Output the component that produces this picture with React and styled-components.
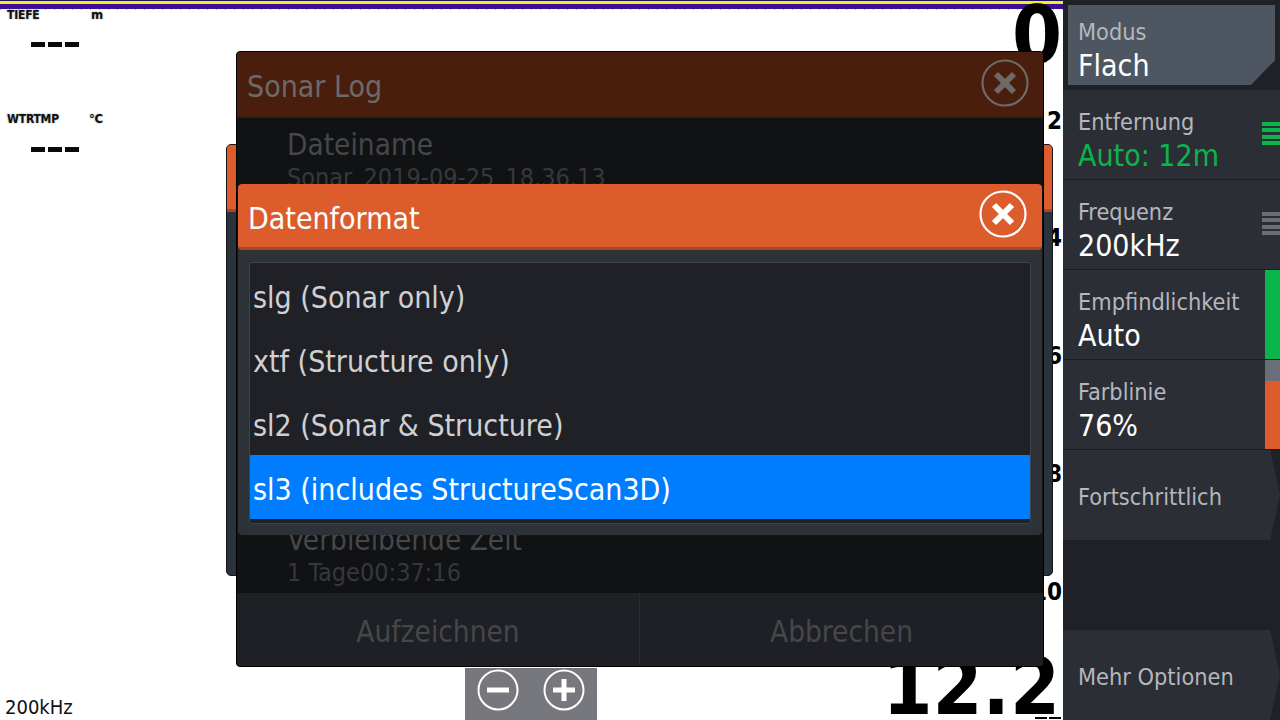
import React from 'react';
import styled, { createGlobalStyle } from 'styled-components';

const UI = '"DejaVu Sans Condensed", "DejaVu Sans", sans-serif';

const Global = createGlobalStyle`
  html, body { margin: 0; padding: 0; background: #fff; }
  body { font-family: ${UI}; overflow: hidden; }
  #root { width: 1280px; height: 720px; }
`;

const Screen = styled.div`
  position: relative;
  width: 1280px;
  height: 720px;
  display: flex;
  overflow: hidden;
  background: #fff;
`;

/* sonar canvas */
const Canvas = styled.div`
  position: relative;
  width: 1063px;
  height: 720px;
  flex: none;
  overflow: hidden;
  background: #fff;
`;
const Surface = styled.div`
  height: 9px;
  background: linear-gradient(#1c1466 0 1px, #f7ee17 1px 4px, #3c0d9c 4px 9px);
`;
const SurfaceSpeckle = styled.div`
  height: 1px;
  background: repeating-linear-gradient(90deg, #777 0 1px, transparent 1px 9px);
  opacity: 0.55;
`;
const Readout = styled.div`
  position: absolute;
  left: 7px;
  top: ${p => p.$top}px;
  width: 96px;
  display: grid;
  grid-template-columns: 1fr auto;
  align-items: center;
  color: #111;
  font: bold 12px/14px ${UI};
  letter-spacing: -0.2px;
  text-shadow: 0 0 2px #999;
`;
const Unit = styled.span`
  font-size: 13px;
`;
const Dashes = styled.div`
  grid-column: 1 / 3;
  display: flex;
  gap: 3px;
  margin: ${p => p.$gap}px 0 0 24px;
  i { width: 14px; height: 5px; background: #0a0a0a; display: block; }
`;
const ScaleNum = styled.div`
  position: absolute;
  right: 1px;
  top: ${p => p.$top}px;
  color: #000;
  font: bold 24px/28px ${UI};
`;
const BigNum = styled.div`
  position: absolute;
  right: ${p => p.$right}px;
  top: ${p => p.$top}px;
  color: #000;
  font: bold 80px/80px ${UI};
`;
const TinyDash = styled.div`
  position: absolute;
  right: 2px;
  top: 717px;
  display: flex;
  gap: 2px;
  i { display: block; width: 12px; height: 2px; background: #000; }
`;
const Freq = styled.div`
  position: absolute;
  left: 5px;
  top: 696px;
  color: #111;
  font: 20px/22px ${UI};
`;
const ZoomBar = styled.div`
  position: absolute;
  left: 465px;
  top: 668px;
  width: 132px;
  height: 52px;
  background: #77787d;
  display: flex;
  align-items: flex-start;
  justify-content: center;
  gap: 24px;
  padding-top: 1px;
  box-sizing: border-box;
`;

/* dialogs */
const BackDialog = styled.div`
  position: absolute;
  left: 236px;
  top: 51px;
  width: 808px;
  height: 616px;
  box-sizing: border-box;
  border: 1px solid #000;
  border-radius: 4px;
  background: #111214;
  display: flex;
  flex-direction: column;
  overflow: hidden;
`;
const BackHeader = styled.div`
  height: 66px;
  flex: none;
  box-sizing: border-box;
  background: #4a1e0c;
  border-bottom: 2px solid #3e1a0c;
  display: flex;
  align-items: center;
  justify-content: space-between;
  padding: 5px 14px 0 10px;
  color: #6c6a68;
  font-size: 30px;
`;
const CloseSlot = styled.div`
  display: flex;
  margin-top: ${p => p.$lift}px;
`;
const BackBody = styled.div`
  flex: 1;
  position: relative;
  padding: 10px 0 0 50px;
  color: #45474a;
`;
const FieldName = styled.div`
  font-size: 29.5px;
  line-height: 35px;
`;
const FieldValue = styled.div`
  font-size: 25px;
  line-height: 30px;
  color: #36383b;
`;
const LowerField = styled.div`
  position: absolute;
  left: 50px;
  top: 405px;
`;
const BackFooter = styled.div`
  height: 73px;
  flex: none;
  background: #1e2025;
  display: grid;
  grid-template-columns: 402px 1fr;
`;
const FooterBtn = styled.div`
  display: flex;
  align-items: center;
  justify-content: center;
  color: #45474a;
  font-size: 29.5px;
  padding-top: 4px;
  box-sizing: border-box;
  & + & { border-left: 1px solid #292b30; }
`;
const MiddleDialog = styled.div`
  position: absolute;
  left: 226px;
  top: 144px;
  width: 827px;
  height: 432px;
  box-sizing: border-box;
  border: 1px solid #14171a;
  border-radius: 5px;
  background: #2a323b;
  overflow: hidden;
`;
const MiddleHeader = styled.div`
  height: 64px;
  background: #dc5c2c;
  border-bottom: 3px solid #a8482a;
`;
const FrontDialog = styled.div`
  position: absolute;
  left: 238px;
  top: 184px;
  width: 804px;
  height: 351px;
  background: #2d3138;
  border-radius: 4px;
  display: flex;
  flex-direction: column;
  overflow: hidden;
`;
const FrontHeader = styled.div`
  height: 66px;
  flex: none;
  box-sizing: border-box;
  background: #dc5c2c;
  border-bottom: 3px solid #a8482a;
  border-radius: 4px;
  display: flex;
  align-items: center;
  justify-content: space-between;
  padding: 6px 15px 0 10px;
  color: #fff;
  font-size: 30px;
`;
const OptionList = styled.div`
  margin: 12px 11px 0;
  width: 782px;
  height: 262px;
  box-sizing: border-box;
  border: 1px solid #3d434a;
  border-radius: 2px;
  background: #1f2126;
`;
const Option = styled.div`
  height: 64px;
  box-sizing: border-box;
  display: flex;
  align-items: center;
  padding: 4px 0 0 3px;
  font-size: 30px;
  color: ${p => (p.$selected ? '#fff' : '#d0d0d2')};
  background: ${p => (p.$selected ? '#007dff' : 'transparent')};
`;

/* sidebar */
const Sidebar = styled.div`
  width: 217px;
  height: 720px;
  flex: none;
  background: #1f2126;
  display: flex;
  flex-direction: column;
`;
const ActiveSlot = styled.div`
  height: 90px;
  flex: none;
  box-sizing: border-box;
  padding: 5px;
`;
const ActiveItem = styled.div`
  height: 80px;
  box-sizing: border-box;
  background: #4e5761;
  padding: 11px 10px 0;
  clip-path: polygon(0 0, 100% 0, 100% 69%, 88.4% 100%, 0 100%);
`;
const Item = styled.div`
  position: relative;
  height: 90px;
  flex: none;
  box-sizing: border-box;
  background: #2c2e36;
  border-bottom: 1px solid #1c1e22;
  padding: 16px 15px 0;
`;
const ArrowItem = styled.div`
  height: 90px;
  flex: none;
  box-sizing: border-box;
  background: #2c2e36;
  display: flex;
  align-items: center;
  padding: 3px 15px 0;
  clip-path: polygon(0 0, 95.5% 0, 100% 50%, 95.5% 100%, 0 100%);
`;
const Spacer = styled.div`
  flex: 1;
`;
const Label = styled.div`
  color: #b4b7bd;
  font-size: 23.3px;
  line-height: 32px;
  white-space: nowrap;
`;
const Value = styled.div`
  color: ${p => p.$color || '#fff'};
  font-size: 30px;
  line-height: 36px;
  white-space: nowrap;
`;
const BarGroup = styled.div`
  position: absolute;
  right: 0;
  top: 32px;
  width: 18px;
  height: 23px;
  display: flex;
  flex-direction: column;
  justify-content: space-between;
  i { display: block; height: 4px; background: ${p => p.$color}; }
`;
const Level = styled.div`
  position: absolute;
  right: 0;
  top: 0;
  bottom: 0;
  width: 15px;
  display: flex;
  flex-direction: column;
  background: ${p => p.$track};
`;
const LevelFill = styled.div`
  margin-top: auto;
  background: ${p => p.$color};
`;

const CloseIcon = ({ color }) => (
  <svg width="48" height="48" viewBox="0 0 48 48" fill="none" stroke={color}>
    <circle cx="24" cy="24" r="22.5" strokeWidth="2.2" />
    <path d="M15 15 33 33M33 15 15 33" strokeWidth="6" />
  </svg>
);
const RoundIcon = ({ plus }) => (
  <svg width="42" height="42" viewBox="0 0 42 42" fill="none" stroke="#fff">
    <circle cx="21" cy="21" r="19.5" strokeWidth="2" />
    <path d={plus ? 'M10 21H32M21 10V32' : 'M10 21H32'} strokeWidth="5" />
  </svg>
);

export default function App() {
  return (
    <Screen>
      <Global />
      <Canvas>
        <Surface />
        <SurfaceSpeckle />
        <Readout $top={8}>
          <span>TIEFE</span><Unit>m</Unit>
          <Dashes $gap={20}><i /><i /><i /></Dashes>
        </Readout>
        <Readout $top={112}>
          <span>WTRTMP</span><Unit>°C</Unit>
          <Dashes $gap={21}><i /><i /><i /></Dashes>
        </Readout>
        <BigNum $right={1} $top={-4}>0</BigNum>
        <ScaleNum $top={107}>2</ScaleNum>
        <ScaleNum $top={224}>4</ScaleNum>
        <ScaleNum $top={342}>6</ScaleNum>
        <ScaleNum $top={460}>8</ScaleNum>
        <ScaleNum $top={578}>10</ScaleNum>
        <BigNum $right={3} $top={647}>12.2</BigNum>
        <TinyDash><i /><i /></TinyDash>
        <Freq>200kHz</Freq>
        <ZoomBar>
          <RoundIcon />
          <RoundIcon plus />
        </ZoomBar>
        <MiddleDialog><MiddleHeader /></MiddleDialog>
        <BackDialog>
          <BackHeader>
            <span>Sonar Log</span>
            <CloseSlot $lift={-7}><CloseIcon color="#6e6a68" /></CloseSlot>
          </BackHeader>
          <BackBody>
            <FieldName>Dateiname</FieldName>
            <FieldValue>Sonar_2019-09-25_18.36.13</FieldValue>
            <LowerField>
              <FieldName>Verbleibende Zeit</FieldName>
              <FieldValue>1 Tage00:37:16</FieldValue>
            </LowerField>
          </BackBody>
          <BackFooter>
            <FooterBtn>Aufzeichnen</FooterBtn>
            <FooterBtn>Abbrechen</FooterBtn>
          </BackFooter>
        </BackDialog>
        <FrontDialog>
          <FrontHeader>
            <span>Datenformat</span>
            <CloseSlot $lift={-10}><CloseIcon color="#fff" /></CloseSlot>
          </FrontHeader>
          <OptionList>
            <Option>slg (Sonar only)</Option>
            <Option>xtf (Structure only)</Option>
            <Option>sl2 (Sonar &amp; Structure)</Option>
            <Option $selected>sl3 (includes StructureScan3D)</Option>
          </OptionList>
        </FrontDialog>
      </Canvas>
      <Sidebar>
        <ActiveSlot>
          <ActiveItem>
            <Label>Modus</Label>
            <Value>Flach</Value>
          </ActiveItem>
        </ActiveSlot>
        <Item>
          <Label>Entfernung</Label>
          <Value $color="#0cb44c">Auto: 12m</Value>
          <BarGroup $color="#0cb44c"><i /><i /><i /><i /></BarGroup>
        </Item>
        <Item>
          <Label>Frequenz</Label>
          <Value>200kHz</Value>
          <BarGroup $color="#6a6e76"><i /><i /><i /><i /></BarGroup>
        </Item>
        <Item>
          <Label>Empfindlichkeit</Label>
          <Value>Auto</Value>
          <Level $track="#0cb44c" />
        </Item>
        <Item>
          <Label>Farblinie</Label>
          <Value>76%</Value>
          <Level $track="#6a6e76">
            <LevelFill $color="#dc5c2c" style={{ height: '76%' }} />
          </Level>
        </Item>
        <ArrowItem><Label>Fortschrittlich</Label></ArrowItem>
        <Spacer />
        <ArrowItem><Label>Mehr Optionen</Label></ArrowItem>
      </Sidebar>
    </Screen>
  );
}
